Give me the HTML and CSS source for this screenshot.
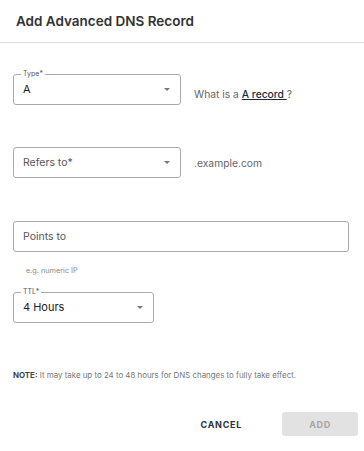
FILE: index.html
```html
<!DOCTYPE html>
<html>
<head>
<meta charset="utf-8">
<link rel="stylesheet" href="styles.css">
</head>
<body>
<div class="dialog">
  <div class="header">Add Advanced DNS Record</div>
  <div class="content">
    <div class="row row-type">
      <div class="field select w168">
        <span class="legend">Type*</span>
        <span class="value">A</span>
        <span class="arrow"></span>
      </div>
      <div class="help">What is a <a class="link">A record </a>?</div>
    </div>
    <div class="row row-refers">
      <div class="field select w168">
        <span class="placeholder">Refers to*</span>
        <span class="arrow"></span>
      </div>
      <div class="suffix">.example.com</div>
    </div>
    <div class="field full row-points">
      <span class="placeholder">Points to</span>
    </div>
    <div class="hint">e.g. numeric IP</div>
    <div class="field select w141 row-ttl">
      <span class="legend">TTL*</span>
      <span class="value">4 Hours</span>
      <span class="arrow"></span>
    </div>
    <div class="note"><b>NOTE:</b> It may take up to 24 to 48 hours for DNS changes to fully take effect.</div>
  </div>
  <div class="footer">
    <div class="btn-cancel">CANCEL</div>
    <div class="btn-add">ADD</div>
  </div>
</div>
</body>
</html>
```
FILE: styles.css
```css
* { box-sizing: border-box; }
html, body { margin: 0; padding: 0; background: #fff; }
body {
  font-family: Inter, "Noto Sans", "Liberation Sans", sans-serif;
  color: #333;
  width: 364px;
  height: 451px;
  overflow: hidden;
}
.header {
  height: 43px;
  border-bottom: 1px solid #dedede;
  display: flex;
  align-items: center;
  padding: 0 16px 1px;
  font-size: 13.5px;
  font-weight: 600;
  color: #333;
}
.content {
  padding: 0 15px 0 13px;
  display: flex;
  flex-direction: column;
  align-items: flex-start;
}
.row { display: flex; }
.row-type { margin-top: 31px; align-items: flex-start; }
.row-refers { margin-top: 42px; align-items: center; }
.field {
  position: relative;
  height: 31px;
  border: 1px solid #a9a9a9;
  border-radius: 3px;
  display: flex;
  align-items: center;
  padding: 0 9px;
  font-size: 11px;
}
.w168 { width: 168px; }
.w141 { width: 141px; }
.full { width: 336px; }
.legend {
  position: absolute;
  left: 7px;
  top: -5px;
  padding: 0 2px;
  background: #fff;
  font-size: 7px;
  line-height: 8px;
  color: #555;
}
.value { color: #222; line-height: 14px; margin-top: -2px; }
.placeholder { color: #555; line-height: 14px; font-size: 10.5px; }
.arrow {
  position: absolute;
  right: 10px;
  top: 13px;
  width: 0;
  height: 0;
  border-left: 3.5px solid transparent;
  border-right: 3.5px solid transparent;
  border-top: 3.5px solid #777;
}
.help {
  margin-left: 13px;
  margin-top: 14px;
  font-size: 10.3px;
  line-height: 12px;
  color: #666;
}
.link {
  color: #1f2a3a;
  text-decoration: underline;
  font-weight: 500;
}
.suffix {
  margin-left: 13px;
  font-size: 10.3px;
  line-height: 12px;
  color: #666;
}
.row-points { margin-top: 43px; }
.hint {
  margin-top: 14px;
  padding-left: 13px;
  font-size: 7.3px;
  line-height: 10px;
  color: #888;
}
.row-ttl { margin-top: 16px; }
.note {
  margin-top: 47px;
  font-size: 7.9px;
  line-height: 10px;
  color: #777;
}
.note b { color: #444; font-weight: 700; }
.footer {
  margin-top: 32px;
  display: flex;
  justify-content: flex-end;
  align-items: center;
  padding-right: 6px;
}
.btn-cancel {
  font-size: 9px;
  font-weight: 700;
  letter-spacing: 0.7px;
  color: #2a3140;
  margin-right: 40px;
}
.btn-add {
  width: 76px;
  height: 24px;
  border-radius: 3px;
  background: #e2e2e2;
  color: #a6a6a6;
  font-size: 9px;
  font-weight: 700;
  letter-spacing: 0.6px;
  display: flex;
  align-items: center;
  justify-content: center;
}
```
